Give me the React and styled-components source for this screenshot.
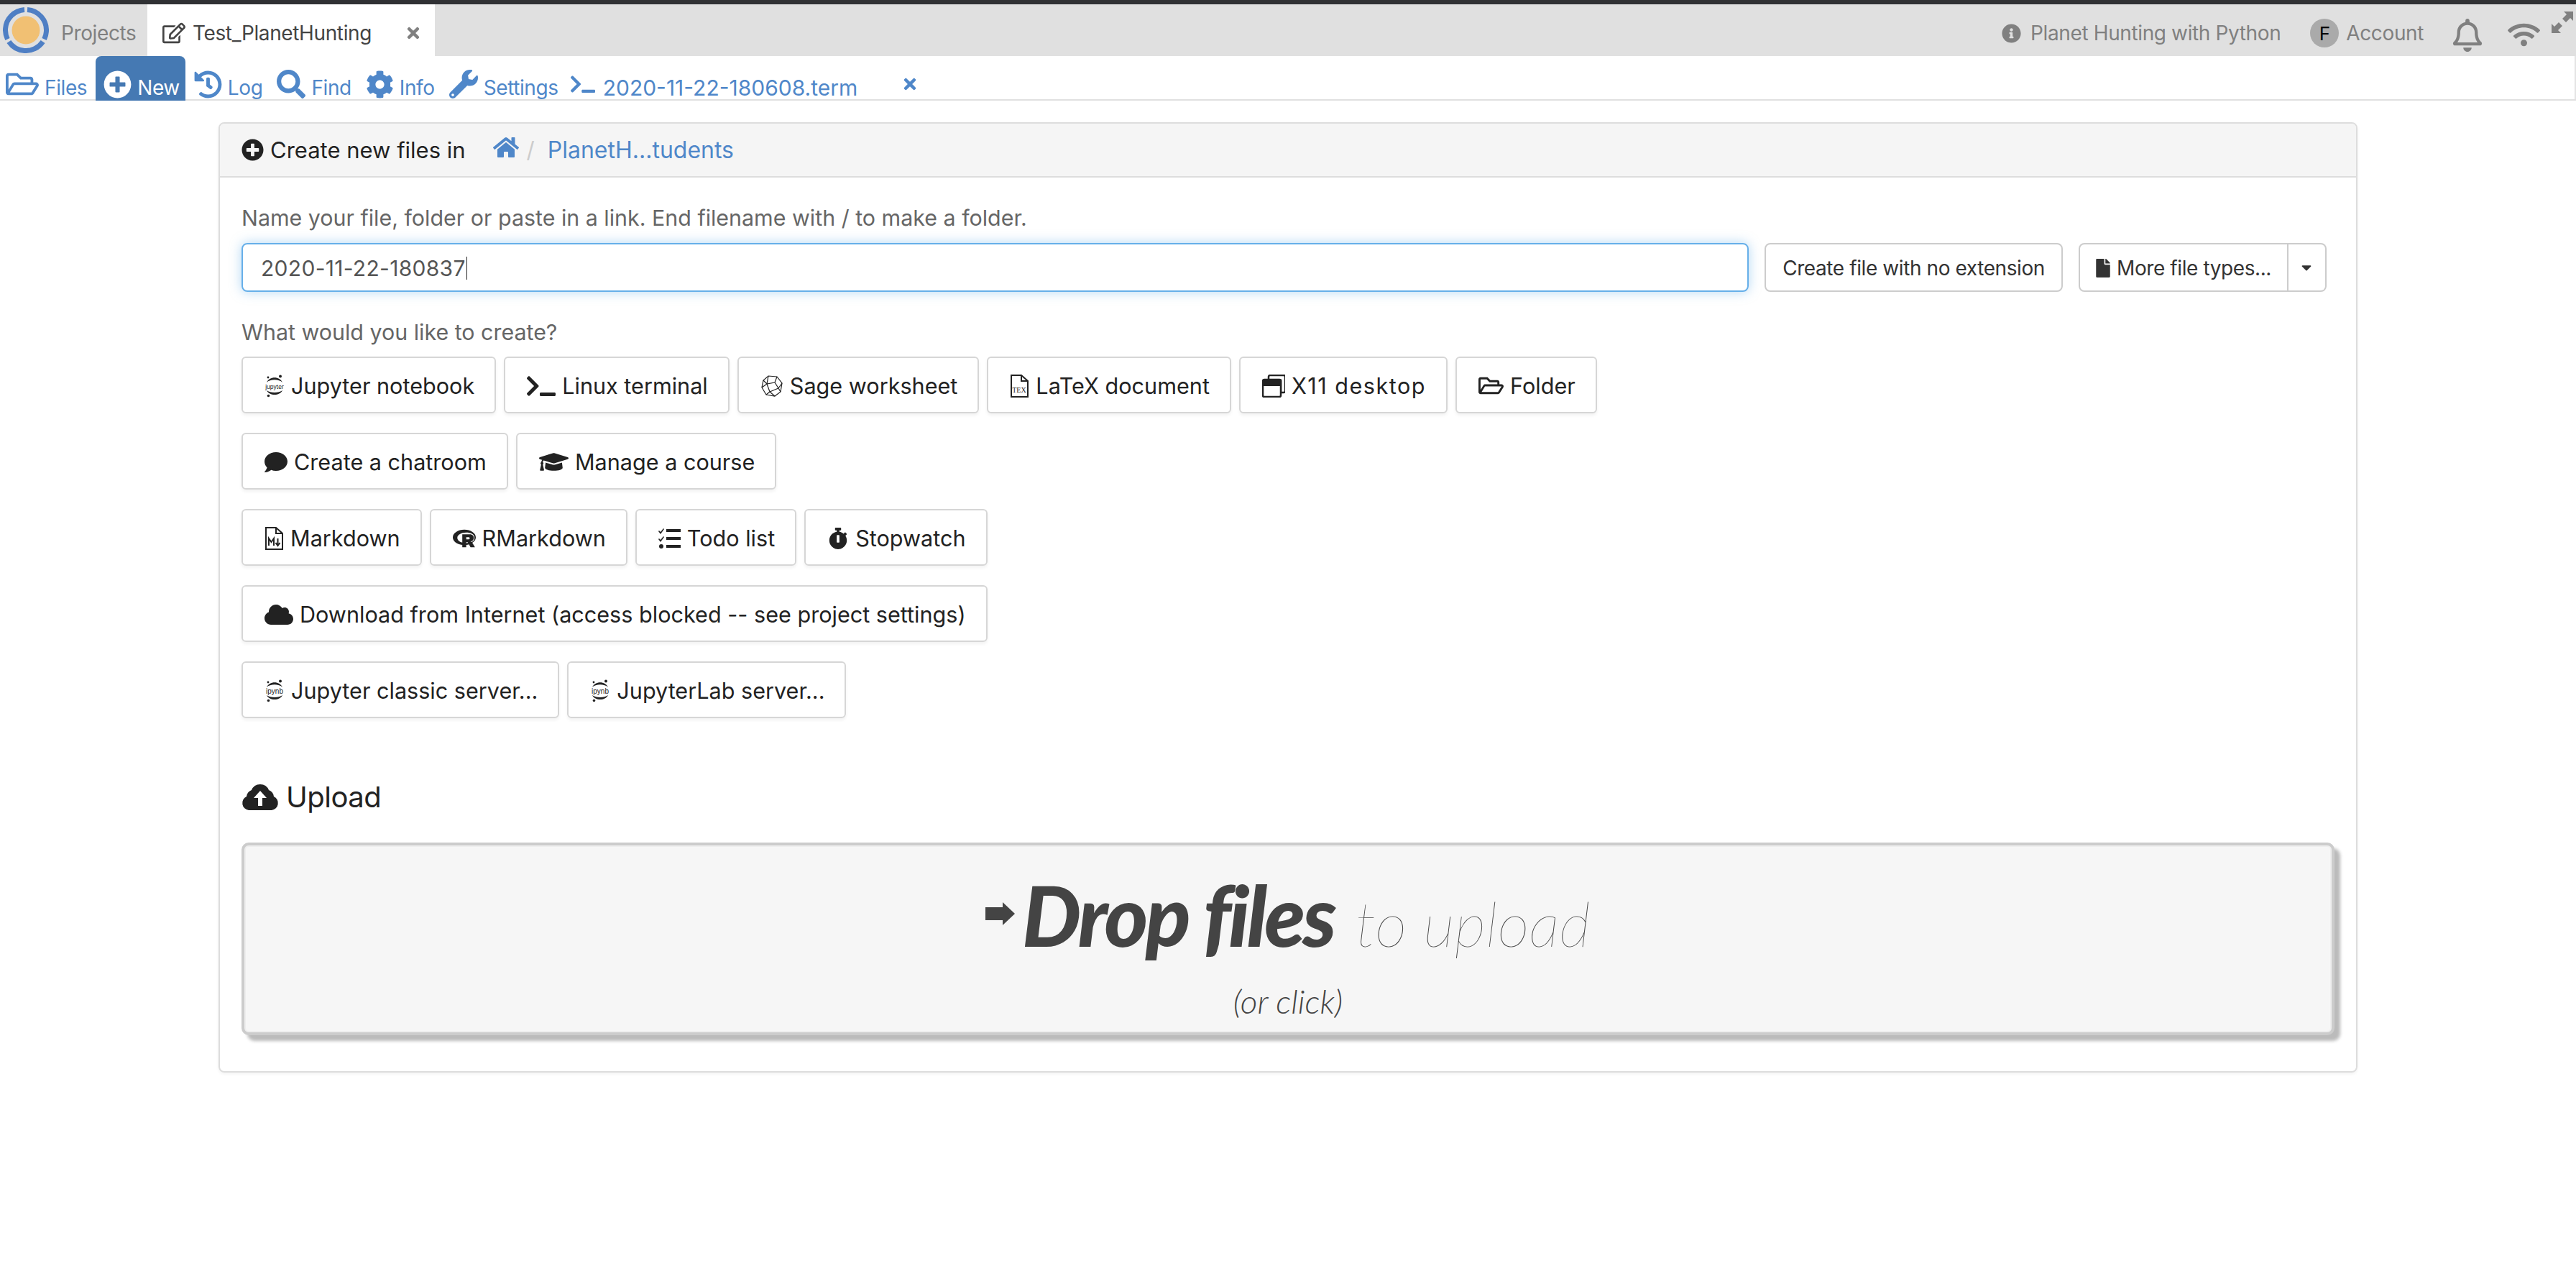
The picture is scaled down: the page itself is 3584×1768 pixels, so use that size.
import React from "react";
import styled, { createGlobalStyle } from "styled-components";
import {
  FaRegFolderOpen, FaPlusCircle, FaHistory, FaSearch, FaCog, FaWrench, FaTerminal, FaTimes,
  FaRegEdit, FaInfoCircle, FaRegBell, FaWifi, FaHome, FaFile, FaCaretDown,
  FaComment, FaGraduationCap, FaRProject, FaStopwatch, FaCloud,
} from "react-icons/fa";

const Global = createGlobalStyle`
  html, body { margin: 0; padding: 0; background: #fff; }
  body { font-family: Inter, "Liberation Sans", sans-serif; color: #333; }
  * { box-sizing: border-box; }
`;

const Page = styled.div`
  width: 3584px;
  min-height: 1768px;
  border-top: 6px solid #303134;
  background: #fff;
`;

const TabBar = styled.div`
  height: 72px;
  display: flex;
  align-items: stretch;
  background: #e0e0e0;
  color: #808080;
  font-size: 28px;
  letter-spacing: -0.38px;
`;

const ProjectsTab = styled.div`
  width: 205px;
  display: flex;
  align-items: center;
  gap: 17px;
  padding: 8px 0 0 4px;
`;

const LogoWrap = styled.svg`
  margin-top: -8px;
`;

const ActiveTab = styled.div`
  width: 400px;
  display: flex;
  align-items: center;
  gap: 10px;
  padding: 8px 18px 0 21px;
  background: #fff;
  color: #444;
`;

const TabName = styled.span`
  flex: 1;
`;

const TabClose = styled(FaTimes)`
  color: #808080;
`;

const TopRight = styled.div`
  margin-left: auto;
  display: flex;
  align-items: center;
  padding: 8px 4px 0 0;
`;

const TopItem = styled.div`
  display: flex;
  align-items: center;
  gap: ${(p) => p.$gap || 10}px;
  margin-left: ${(p) => p.$left || 0}px;
  margin-top: ${(p) => p.$top || 0}px;
`;

const Avatar = styled.div`
  width: 40px;
  height: 40px;
  border-radius: 50%;
  background: #aaa;
  color: #000;
  display: flex;
  align-items: center;
  justify-content: center;
  font-size: 26px;
`;

const Nav = styled.div`
  height: 62px;
  display: flex;
  gap: 4px;
  box-shadow: inset 0 -2px 0 #e0e0e0, inset -2px 0 0 #e4e4e4;
  font-size: 28px;
  letter-spacing: -0.4px;
  color: #4f87c9;
`;

const NavItem = styled.div`
  display: flex;
  align-items: center;
  gap: 8px;
  padding: 26px 8px 0 ${(p) => (p.$active ? 11 : 8)}px;
  border-radius: 8px 8px 0 0;
  background: ${(p) => (p.$active ? "#4579b3" : "transparent")};
  color: ${(p) => (p.$active ? "#fff" : "inherit")};
  svg { margin-bottom: 10px; }
`;

const TermItem = styled(NavItem)`
  margin-left: -3px;
  gap: 11px;
  font-size: 30px;
  letter-spacing: 0;
`;

const TermClose = styled(FaTimes)`
  margin-left: 50px;
`;

const Panel = styled.div`
  margin: 30px 0 0 304px;
  width: 2976px;
  border: 2px solid #ddd;
  border-radius: 8px;
  box-shadow: 0 2px 4px rgba(0, 0, 0, 0.05);
`;

const PanelHead = styled.div`
  height: 75px;
  display: flex;
  align-items: center;
  padding-left: 30px;
  background: #f5f5f5;
  border-bottom: 2px solid #ddd;
  border-radius: 6px 6px 0 0;
  font-size: 31px;
  color: #222;
`;

const HeadTitle = styled.div`
  display: flex;
  align-items: center;
  gap: 9px;
  margin-right: 38px;
`;

const Crumb = styled.a`
  color: #4f87c9;
  font-size: 32px;
`;

const Slash = styled.span`
  margin: 0 18px 0 11px;
  color: #ccc;
`;

const PanelBody = styled.div`
  padding: 36px 30px 50px;
`;

const Hint = styled.div`
  font-size: 30.4px;
  line-height: 40px;
  color: #666;
`;

const NameRow = styled.div`
  display: flex;
  align-items: center;
  margin: 15px 11px 36px 0;
`;

const NameInput = styled.div`
  flex: 1;
  height: 68px;
  display: flex;
  align-items: center;
  padding: 2px 0 0 25px;
  border: 2px solid #66afe9;
  border-radius: 8px;
  box-shadow: 0 0 16px rgba(102, 175, 233, 0.5);
  font-size: 30px;
  letter-spacing: 0.3px;
  color: #555;
`;

const Caret = styled.span`
  width: 1px;
  height: 32px;
  background: #222;
  margin-left: 1px;
`;

const SmallBtn = styled.div`
  height: 68px;
  display: flex;
  align-items: center;
  gap: 9px;
  padding: 2px 23px 0;
  margin-left: ${(p) => p.$left || 0}px;
  border: 2px solid #ccc;
  border-radius: 8px;
  font-size: 28px;
  letter-spacing: -0.41px;
  color: #333;
`;

const SplitLeft = styled(SmallBtn)`
  border-radius: 8px 0 0 8px;
  padding: 2px 22px 0;
`;

const FileGlyph = styled(FaFile)`
  margin: 0 -3px;
`;

const SplitRight = styled(SmallBtn)`
  border-radius: 0 8px 8px 0;
  border-left: 0;
  padding: 0 15px 0 14px;
`;

const BtnRow = styled.div`
  display: flex;
  gap: 11px;
  margin-top: ${(p) => p.$top || 27}px;
`;

const Btn = styled.div`
  height: 79px;
  display: flex;
  align-items: center;
  gap: 9px;
  padding: 2px 28px 0 30px;
  border: 2px solid #d6d6d6;
  border-radius: 6px;
  box-shadow: 0 3px 4px rgba(0, 0, 0, 0.05);
  font-size: 30.6px;
  color: #222;
  white-space: nowrap;
`;

const BtnLabel = styled.span`
  letter-spacing: ${(p) => p.$spread || 0}px;
`;

const UploadTitle = styled.div`
  display: flex;
  align-items: center;
  gap: 10px;
  height: 50px;
  padding-top: 2px;
  margin: 83px 0 40px;
  font-size: 40px;
  letter-spacing: -0.5px;
  color: #222;
`;

const Drop = styled.div`
  height: 268px;
  display: flex;
  flex-direction: column;
  align-items: center;
  padding-top: 30px;
  background: #f6f6f6;
  border: 4px solid #ccc;
  border-radius: 10px;
  box-shadow: inset 0 0 0 2px #eee, 8px 8px 4px #bbb;
  font-family: Lato, sans-serif;
  color: #444;
`;

const DropLine = styled.div`
  display: flex;
  align-items: baseline;
  height: 130px;
  line-height: 130px;
  font-size: 116px;
  font-style: italic;
`;

const DropStrong = styled.span`
  font-weight: 900;
  margin: 2px 30px 0 10px;
  letter-spacing: -3.7px;
`;

const DropThin = styled.span`
  font-weight: 100;
  font-size: 86px;
  color: #444;
`;

const DropArrow = styled.svg`
  align-self: center;
`;

const DropSub = styled.div`
  margin-top: 29px;
  font-size: 46px;
  font-style: italic;
  font-weight: 300;
`;

const FileOutline = () => (
  <path d="M2 1h14l9 8v22H2z M16 1v8h9" fill="none" stroke="currentColor" strokeWidth="2" />
);

const TinyLabel = styled.text`
  font-family: ${(p) => p.$family || '"Liberation Serif", serif'};
  font-size: ${(p) => p.$size}px;
  fill: currentColor;
`;

const JupyterIcon = ({ label = "jupyter" }) => (
  <svg width="28" height="32" viewBox="0 0 28 32">
    <path d="M3 11 C7 2 21 2 25 11 C20 6 8 6 3 11z" fill="currentColor" />
    <path d="M3 22 C7 30 21 30 25 22 C20 26 8 26 3 22z" fill="currentColor" />
    <circle cx="22" cy="2.5" r="2" fill="currentColor" />
    <circle cx="5" cy="4" r="1.4" fill="currentColor" />
    <circle cx="5.5" cy="29.5" r="1.8" fill="currentColor" />
    <TinyLabel x="14" y="19.5" $size={label === "jupyter" ? 8.5 : 10} $family='"Liberation Sans", sans-serif' textAnchor="middle">{label}</TinyLabel>
  </svg>
);

const SageIcon = () => (
  <svg width="32" height="32" viewBox="0 0 32 32" fill="none" stroke="currentColor" strokeWidth="1.2">
    <path d="M11 2 L23 3 L30 12 L28 24 L20 30 L8 28 L2 18 L4 8z" />
    <path d="M11 2 L9 13 L20 11 L23 3 M9 13 L4 8 M9 13 L2 18 M9 13 L13 24 L8 28 M13 24 L20 30 M13 24 L25 19 L20 11 M25 19 L30 12 M25 19 L28 24" />
  </svg>
);

const TexIcon = () => (
  <svg width="27" height="32" viewBox="0 0 27 32">
    <FileOutline />
    <TinyLabel x="13" y="25" $size={10} textAnchor="middle">TEX</TinyLabel>
  </svg>
);

const MdIcon = () => (
  <svg width="27" height="32" viewBox="0 0 27 32">
    <FileOutline />
    <path d="M6 26V16l3.5 5 3.5-5v10 M18.5 16v9 M15.5 22l3 4 3-4" fill="none" stroke="currentColor" strokeWidth="2" />
  </svg>
);

const X11Icon = () => (
  <svg width="32" height="32" viewBox="0 0 32 32">
    <path d="M9 3a2 2 0 0 1 2-2h19a2 2 0 0 1 2 2v20a2 2 0 0 1-2 2h-4V8H9z" fill="none" stroke="currentColor" strokeWidth="2.5" />
    <rect x="1" y="7" width="25" height="24" rx="2" fill="#fff" stroke="currentColor" strokeWidth="2.5" />
    <rect x="1" y="7" width="25" height="9" fill="currentColor" />
  </svg>
);

const TodoIcon = () => (
  <svg width="31" height="28" viewBox="0 0 31 28" fill="currentColor">
    <rect x="11" y="1" width="20" height="4" />
    <rect x="11" y="12" width="20" height="4" />
    <rect x="11" y="23" width="20" height="4" />
    <path d="M1 3l2 2 4-5 1 1-5 7-3-4z M1 14l2 2 4-5 1 1-5 7-3-4z" />
    <circle cx="4" cy="25" r="3" />
  </svg>
);

const UploadIcon = () => (
  <svg width="52" height="38" viewBox="0 0 52 38">
    <path d="M10 38a10 10 0 0 1-3-19 11 11 0 0 1 7-9 13 13 0 0 1 24 0 11 11 0 0 1 7 9 10 10 0 0 1-3 19z" fill="currentColor" />
    <path d="M26 11l9 10h-6v11h-6V21h-6z" fill="#fff" />
  </svg>
);

const ExpandIcon = () => (
  <svg width="30" height="30" viewBox="0 0 30 30" fill="currentColor">
    <path d="M30 0v13l-4-4-6 6-5-5 6-6-4-4z" />
    <path d="M0 30V17l4 4 6-6 5 5-6 6 4 4z" />
  </svg>
);

const Logo = () => (
  <LogoWrap width="64" height="64" viewBox="0 0 64 64">
    <circle cx="32" cy="32" r="28.5" fill="none" stroke="#4f7fc4" strokeWidth="7" pathLength="360" strokeDasharray="112 8" transform="rotate(-86 32 32)" />
    <circle cx="32" cy="32" r="19.5" fill="#f1c073" />
  </LogoWrap>
);

const rows = [
  [
    [<JupyterIcon />, "Jupyter notebook"],
    [<FaTerminal size={40} />, "Linux terminal"],
    [<SageIcon />, "Sage worksheet"],
    [<TexIcon />, "LaTeX document"],
    [<X11Icon />, "X11 desktop", 1.5],
    [<FaRegFolderOpen size={35} />, "Folder"],
  ],
  [
    [<FaComment size={32} />, "Create a chatroom"],
    [<FaGraduationCap size={41} />, "Manage a course"],
  ],
  [
    [<MdIcon />, "Markdown"],
    [<FaRProject size={32} />, "RMarkdown"],
    [<TodoIcon />, "Todo list"],
    [<FaStopwatch size={30} />, "Stopwatch"],
  ],
  [[<FaCloud size={40} />, "Download from Internet (access blocked -- see project settings)"]],
  [
    [<JupyterIcon label="ipynb" />, "Jupyter classic server..."],
    [<JupyterIcon label="ipynb" />, "JupyterLab server..."],
  ],
];

const navItems = [
  [<FaRegFolderOpen size={46} />, "Files"],
  [<FaPlusCircle size={39} />, "New", true],
  [<FaHistory size={39} />, "Log"],
  [<FaSearch size={40} />, "Find"],
  [<FaCog size={39} />, "Info"],
  [<FaWrench size={40} />, "Settings"],
];

export default function App() {
  return (
    <Page>
      <Global />
      <TabBar>
        <ProjectsTab>
          <Logo />
          <span>Projects</span>
        </ProjectsTab>
        <ActiveTab>
          <FaRegEdit size={32} />
          <TabName>Test_PlanetHunting</TabName>
          <TabClose size={24} />
        </ActiveTab>
        <TopRight>
          <TopItem $gap={13}>
            <FaInfoCircle size={27} />
            <span>Planet Hunting with Python</span>
          </TopItem>
          <TopItem $left={41}>
            <Avatar>F</Avatar>
            <span>Account</span>
          </TopItem>
          <TopItem $left={38} $top={6}>
            <FaRegBell size={46} />
          </TopItem>
          <TopItem $left={33} $top={4}>
            <FaWifi size={45} />
          </TopItem>
          <TopItem $left={16} $top={-30}>
            <ExpandIcon />
          </TopItem>
        </TopRight>
      </TabBar>
      <Nav>
        {navItems.map(([icon, label, active]) => (
          <NavItem key={label} $active={active}>
            {icon}
            <span>{label}</span>
          </NavItem>
        ))}
        <TermItem>
          <FaTerminal size={34} />
          <span>2020-11-22-180608.term</span>
          <TermClose size={24} />
        </TermItem>
      </Nav>
      <Panel>
        <PanelHead>
          <HeadTitle>
            <FaPlusCircle size={31} />
            <span>Create new files in</span>
          </HeadTitle>
          <Crumb><FaHome size={36} /></Crumb>
          <Slash>/</Slash>
          <Crumb>PlanetH...tudents</Crumb>
        </PanelHead>
        <PanelBody>
          <Hint>Name your file, folder or paste in a link. End filename with / to make a folder.</Hint>
          <NameRow>
            <NameInput>
              2020-11-22-180837
              <Caret />
            </NameInput>
            <SmallBtn $left={22}>Create file with no extension</SmallBtn>
            <SplitLeft $left={22}>
              <FileGlyph size={26} />
              More file types...
            </SplitLeft>
            <SplitRight>
              <FaCaretDown size={22} />
            </SplitRight>
          </NameRow>
          <Hint>What would you like to create?</Hint>
          {rows.map((row, i) => (
            <BtnRow key={i} $top={i === 0 ? 14 : 27}>
              {row.map(([icon, label, spread]) => (
                <Btn key={label}>
                  {icon}
                  <BtnLabel $spread={spread}>{label}</BtnLabel>
                </Btn>
              ))}
            </BtnRow>
          ))}
          <UploadTitle>
            <UploadIcon />
            <span>Upload</span>
          </UploadTitle>
          <Drop>
            <DropLine>
              <DropArrow width="41" height="32" viewBox="0 0 41 32">
                <path d="M0 7h24V0l17 16-17 16v-7H0z" fill="#444" />
              </DropArrow>
              <DropStrong>Drop files</DropStrong>
              <DropThin>to upload</DropThin>
            </DropLine>
            <DropSub>(or click)</DropSub>
          </Drop>
        </PanelBody>
      </Panel>
    </Page>
  );
}
